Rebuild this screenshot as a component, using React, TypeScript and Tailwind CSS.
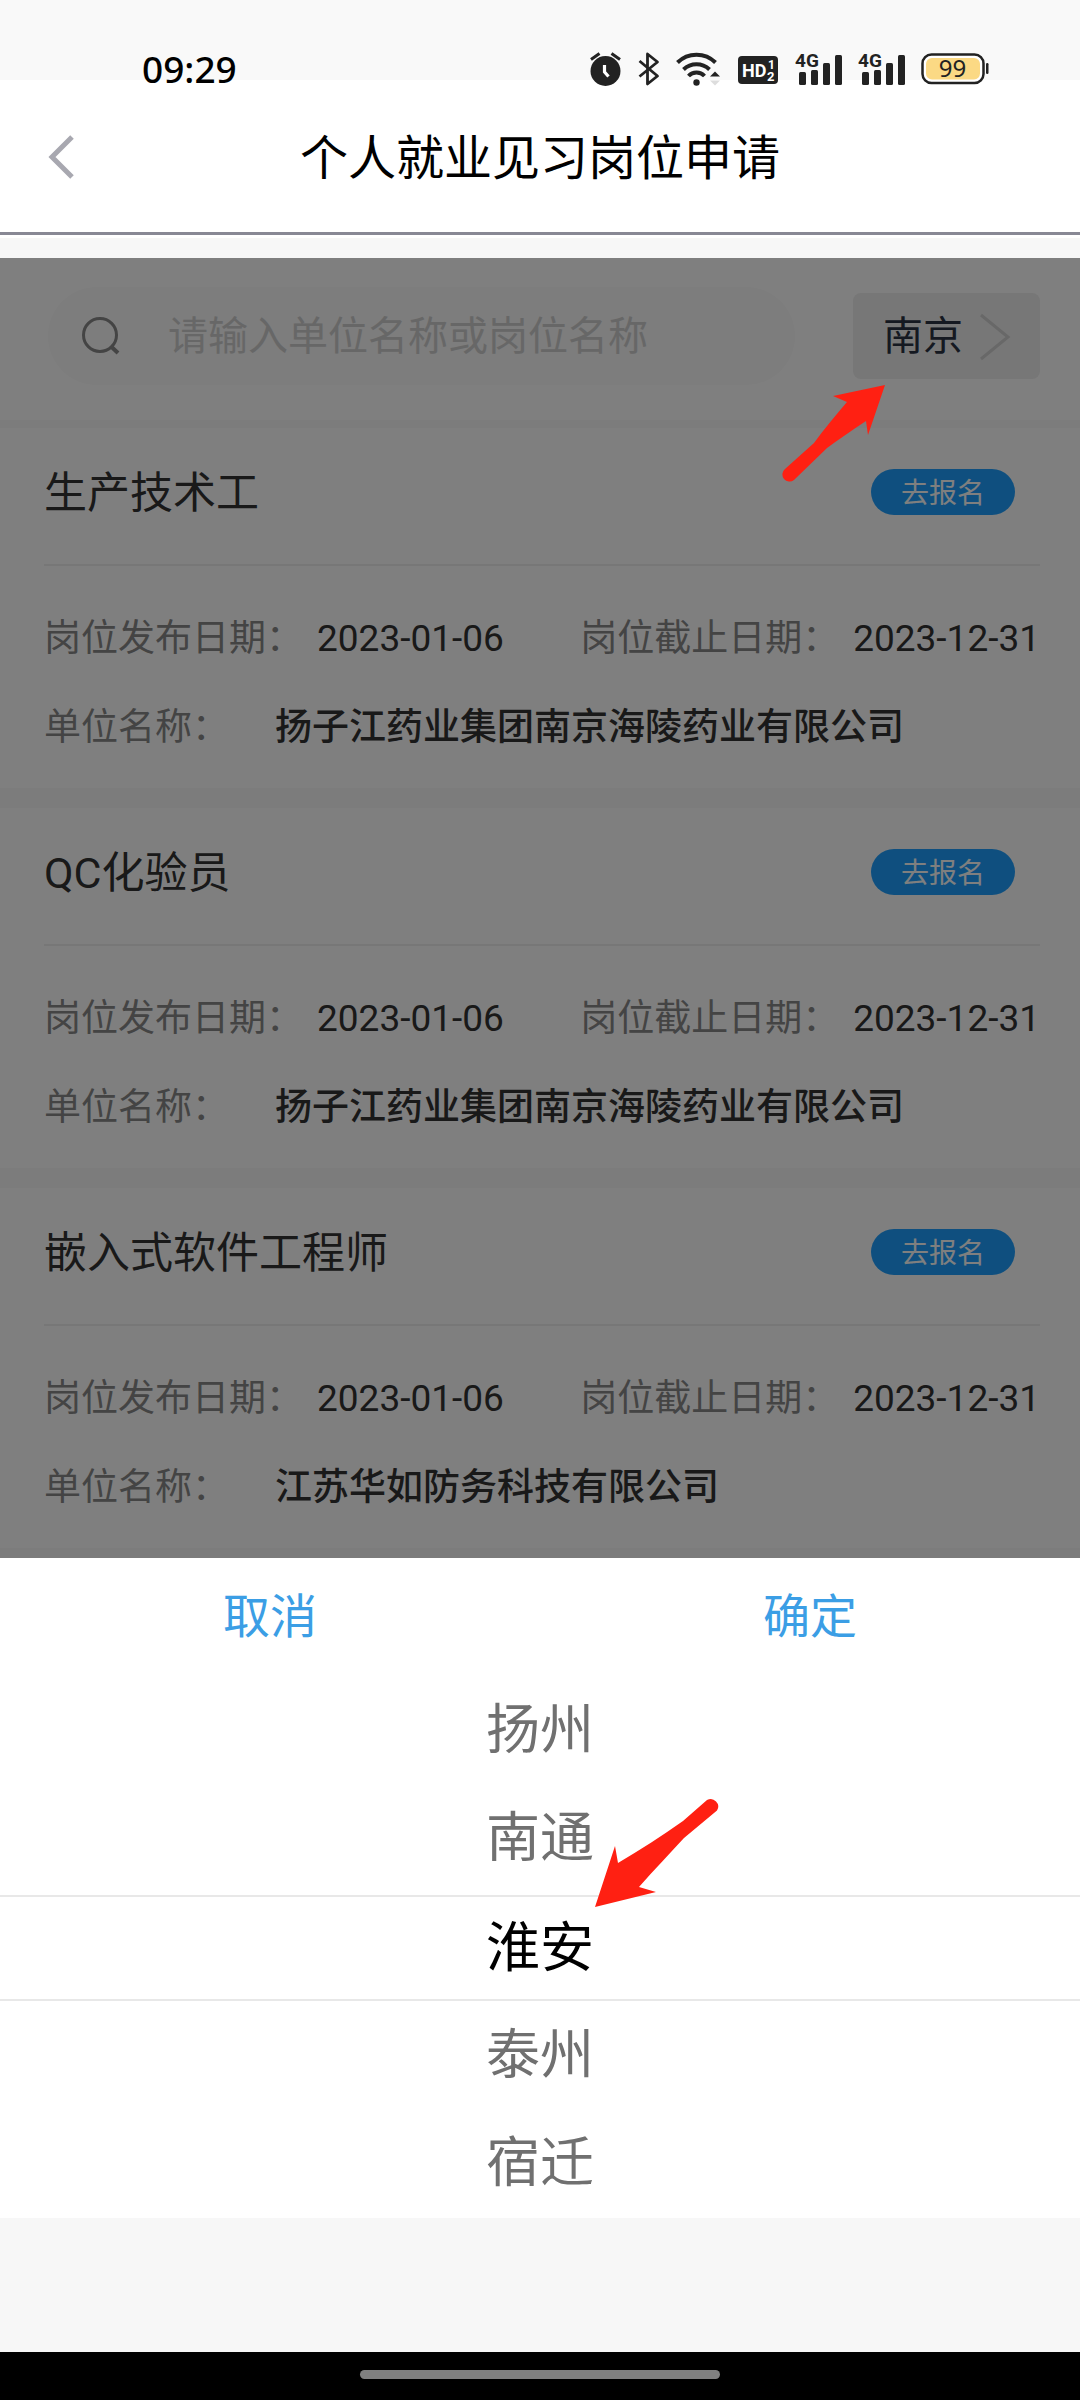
import { useState } from "react";

const jobs = [
    { title: "生产技术工", company: "扬子江药业集团南京海陵药业有限公司", start: "2023-01-06", end: "2023-12-31" },
    { title: "QC化验员", company: "扬子江药业集团南京海陵药业有限公司", start: "2023-01-06", end: "2023-12-31" },
    { title: "嵌入式软件工程师", company: "江苏华如防务科技有限公司", start: "2023-01-06", end: "2023-12-31" },
];

const cities = ["扬州", "南通", "淮安", "泰州", "宿迁"];

const SignalIcon = () => (
    <svg width="47" height="50" viewBox="0 -8 47 50" fill="#222" aria-hidden="true">
        <text x="0" y="15" fontSize="19" fontWeight="700" fontFamily="Roboto, sans-serif">4G</text>
        <rect x="4" y="20" width="7" height="13" rx="1.5" />
        <rect x="16" y="18" width="7" height="15" rx="1.5" />
        <rect x="28" y="11" width="7" height="22" rx="1.5" />
        <rect x="40" y="3" width="7" height="30" rx="1.5" />
    </svg>
);

const StatusBar = () => (
    <div className="flex h-[90px] items-center justify-between pt-12 pr-[91px] pl-[142px]">
        <span className="font-['Noto_Sans',sans-serif] text-[37px] leading-10 font-medium text-black">09:29</span>
        <div className="flex items-center gap-4">
            <svg width="32" height="34" viewBox="0 0 32 34" fill="none" aria-hidden="true">
                <circle cx="15.5" cy="19" r="15" fill="#222" />
                <path d="M1 7.5 9.5 1.5M21.5 1.5 30 7.5" stroke="#222" strokeWidth="3" />
                <path d="M14.5 13v7l4 4.5" stroke="#fff" strokeWidth="3.2" />
            </svg>
            <svg width="22" height="34" viewBox="0 0 22 34" fill="none" stroke="#222" strokeWidth="2.8" aria-hidden="true">
                <path d="M1.5 9 19.5 24 9.5 32V2L19.5 10 1.5 24.5" strokeLinejoin="round" />
            </svg>
            <svg width="46" height="36" viewBox="0 0 46 36" fill="none" stroke="#222" strokeWidth="4" aria-hidden="true">
                <path d="M1.5 11.5a27 27 0 0 1 38 0M7.5 18.5a19 19 0 0 1 26 0M12.5 25a11 11 0 0 1 16 0" />
                <circle cx="20.5" cy="31.5" r="3.2" fill="#222" stroke="none" />
                <path d="M34 25.5 39 20.5 44 25.5Z" fill="#222" stroke="none" />
                <path d="M34 29.5 39 34.5 44 29.5Z" fill="#ddd" stroke="none" />
            </svg>
            <svg width="41" height="34" viewBox="0 0 41 34" aria-hidden="true">
                <rect x="0" y="4" width="40" height="28" rx="4" fill="#222" />
                <g fill="#fff" fontFamily="Roboto, sans-serif" fontWeight="700">
                    <text x="4" y="25" fontSize="18">HD</text>
                    <text x="30" y="17" fontSize="12">1</text>
                    <text x="29" y="29" fontSize="13">2</text>
                </g>
            </svg>
            <SignalIcon />
            <SignalIcon />
            <svg width="68" height="44" viewBox="0 -6 68 44" aria-hidden="true">
                <rect x="1.5" y="1.5" width="61" height="28.5" rx="9" fill="#fff" stroke="#222" strokeWidth="2.5" />
                <rect x="5" y="5" width="54" height="21.5" rx="6" fill="#fbd984" />
                <rect x="65" y="10" width="2.5" height="11" rx="1.2" fill="#222" />
                <text x="31.5" y="24" fontSize="24" textAnchor="middle" fill="#222" fontFamily="Noto Sans, sans-serif">99</text>
            </svg>
        </div>
    </div>
);

const JobCard = ({ job }: { job: (typeof jobs)[number] }) => (
    <article className="bg-white pr-10 pb-4 pl-11">
        <div className="flex h-[138px] items-center justify-between border-b-2 border-[#eeeeee] pr-[25px] pb-2">
            <h2 className="pt-0.5 text-[43px] leading-[60px] text-[#333333]">{job.title}</h2>
            <button type="button" className="h-[46px] w-36 rounded-full bg-[#1e9fff] pt-1 text-[28px] leading-[42px] text-white">
                去报名
            </button>
        </div>
        <dl className="pt-7 text-[37px] leading-[89px] text-[#333333]">
            <div className="flex justify-between">
                <div className="flex gap-3.5">
                    <dt className="text-[#888888]">岗位发布日期：</dt>
                    <dd>{job.start}</dd>
                </div>
                <div className="flex gap-3.5">
                    <dt className="text-[#888888]">岗位截止日期：</dt>
                    <dd>{job.end}</dd>
                </div>
            </div>
            <div className="flex gap-[46px]">
                <dt className="text-[#888888]">单位名称：</dt>
                <dd className="font-medium">{job.company}</dd>
            </div>
        </dl>
    </article>
);

const CityPicker = ({ selected, onSelect }: { selected: string; onSelect: (city: string) => void }) => (
    <section aria-label="选择城市" className="bg-white pb-px">
        <div className="grid h-[118px] grid-cols-2 text-[47px] text-[#3b9ee5]">
            <button type="button">取消</button>
            <button type="button">确定</button>
        </div>
        <ul className="text-center text-[54px]">
            {cities.map((city) =>
                city === selected ? (
                    <li key={city} className="relative mt-[3px] h-[106px] border-y-2 border-[#e8e8e8] text-black">
                        <button type="button" aria-pressed="true" className="h-full w-full">
                            {city}
                        </button>
                        <svg className="absolute -top-[103px] left-[calc(50%+52px)]" width="130" height="116" viewBox="0 0 130 116" fill="#ff2012" aria-hidden="true">
                            <path d="M3 113 23 52 26 69C48 56 70 42 91 27L115 6A7.5 7.5 0 0 1 125 16.5L92 44C78 59 63 75 47 93L64 98Z" />
                        </svg>
                    </li>
                ) : (
                    <li key={city} className="h-27 text-[#707070]">
                        <button type="button" aria-pressed="false" className="h-full w-full" onClick={() => onSelect(city)}>
                            {city}
                        </button>
                    </li>
                ),
            )}
        </ul>
    </section>
);

export default function App() {
    const [city, setCity] = useState("淮安");

    return (
        <div className="flex min-h-screen flex-col bg-[#f7f7f7] font-[Roboto,'Noto_Sans_CJK_SC',sans-serif]">
            <header className="bg-[linear-gradient(#f9f9f9_80px,#ffffff_80px)]">
                <StatusBar />
                <div className="grid h-[142px] grid-cols-[120px_1fr_120px] items-center pb-1">
                    <button type="button" aria-label="返回" className="pl-12">
                        <svg width="28" height="48" viewBox="0 0 28 48" fill="none" stroke="#a8a8b0" strokeWidth="5" aria-hidden="true">
                            <path d="M24 2 4 22 24 42" />
                        </svg>
                    </button>
                    <h1 className="text-center text-[48px] leading-[64px] text-black">个人就业见习岗位申请</h1>
                </div>
                <div className="h-1.5 border-t-3 border-[#888894]" />
            </header>

            <main className="relative mt-5 bg-[#f8f8f8] pb-2.5">
                {/* Search */}
                <div className="mb-2 flex h-[162px] items-center gap-[58px] bg-white pr-10 pb-1.5 pl-12">
                    <label className="flex h-[98px] flex-1 items-center gap-[48px] rounded-full bg-[#fafafa] pl-[34px]">
                        <svg width="38" height="38" viewBox="0 0 38 38" fill="none" stroke="#888" strokeWidth="3" aria-hidden="true">
                            <circle cx="18" cy="18" r="16.5" />
                            <path d="M28.5 29 36 36" strokeWidth="4" />
                        </svg>
                        <input
                            type="text"
                            aria-label="搜索"
                            placeholder="请输入单位名称或岗位名称"
                            className="min-w-0 flex-1 bg-transparent pt-0.5 text-[40px] leading-[60px] outline-none placeholder:text-[#cecece]"
                        />
                    </label>
                    <button type="button" className="flex h-[86px] w-[187px] items-center gap-4 rounded-lg bg-[#eeeeee] pt-0.5 pl-[30px] text-[40px] text-[#2a3242]">
                        南京
                        <svg width="32" height="48" viewBox="0 0 32 48" fill="none" stroke="#d0d0d0" strokeWidth="3" aria-hidden="true">
                            <path d="M2 2 29 24 2 46" />
                        </svg>
                    </button>
                </div>

                {/* Job list */}
                <div className="flex flex-col gap-5">
                    {jobs.map((job) => (
                        <JobCard key={job.title} job={job} />
                    ))}
                </div>

                <div className="absolute inset-0 bg-black/50" />
                <svg className="absolute top-[124px] right-[192px]" width="108" height="104" viewBox="0 0 108 104" fill="#ff2012" aria-hidden="true">
                    <path d="M105 3 53 14 67 20C56 33 45 46 34 61L5 87A7 7 0 0 0 14 98L47 66C58 58 71 49 86 39L88 53Z" />
                </svg>
            </main>

            <CityPicker selected={city} onSelect={setCity} />

            <footer className="mt-auto flex h-12 justify-center bg-black pt-[18px]">
                <div className="h-[9px] w-1/3 rounded-full bg-[#808080]" />
            </footer>
        </div>
    );
}
